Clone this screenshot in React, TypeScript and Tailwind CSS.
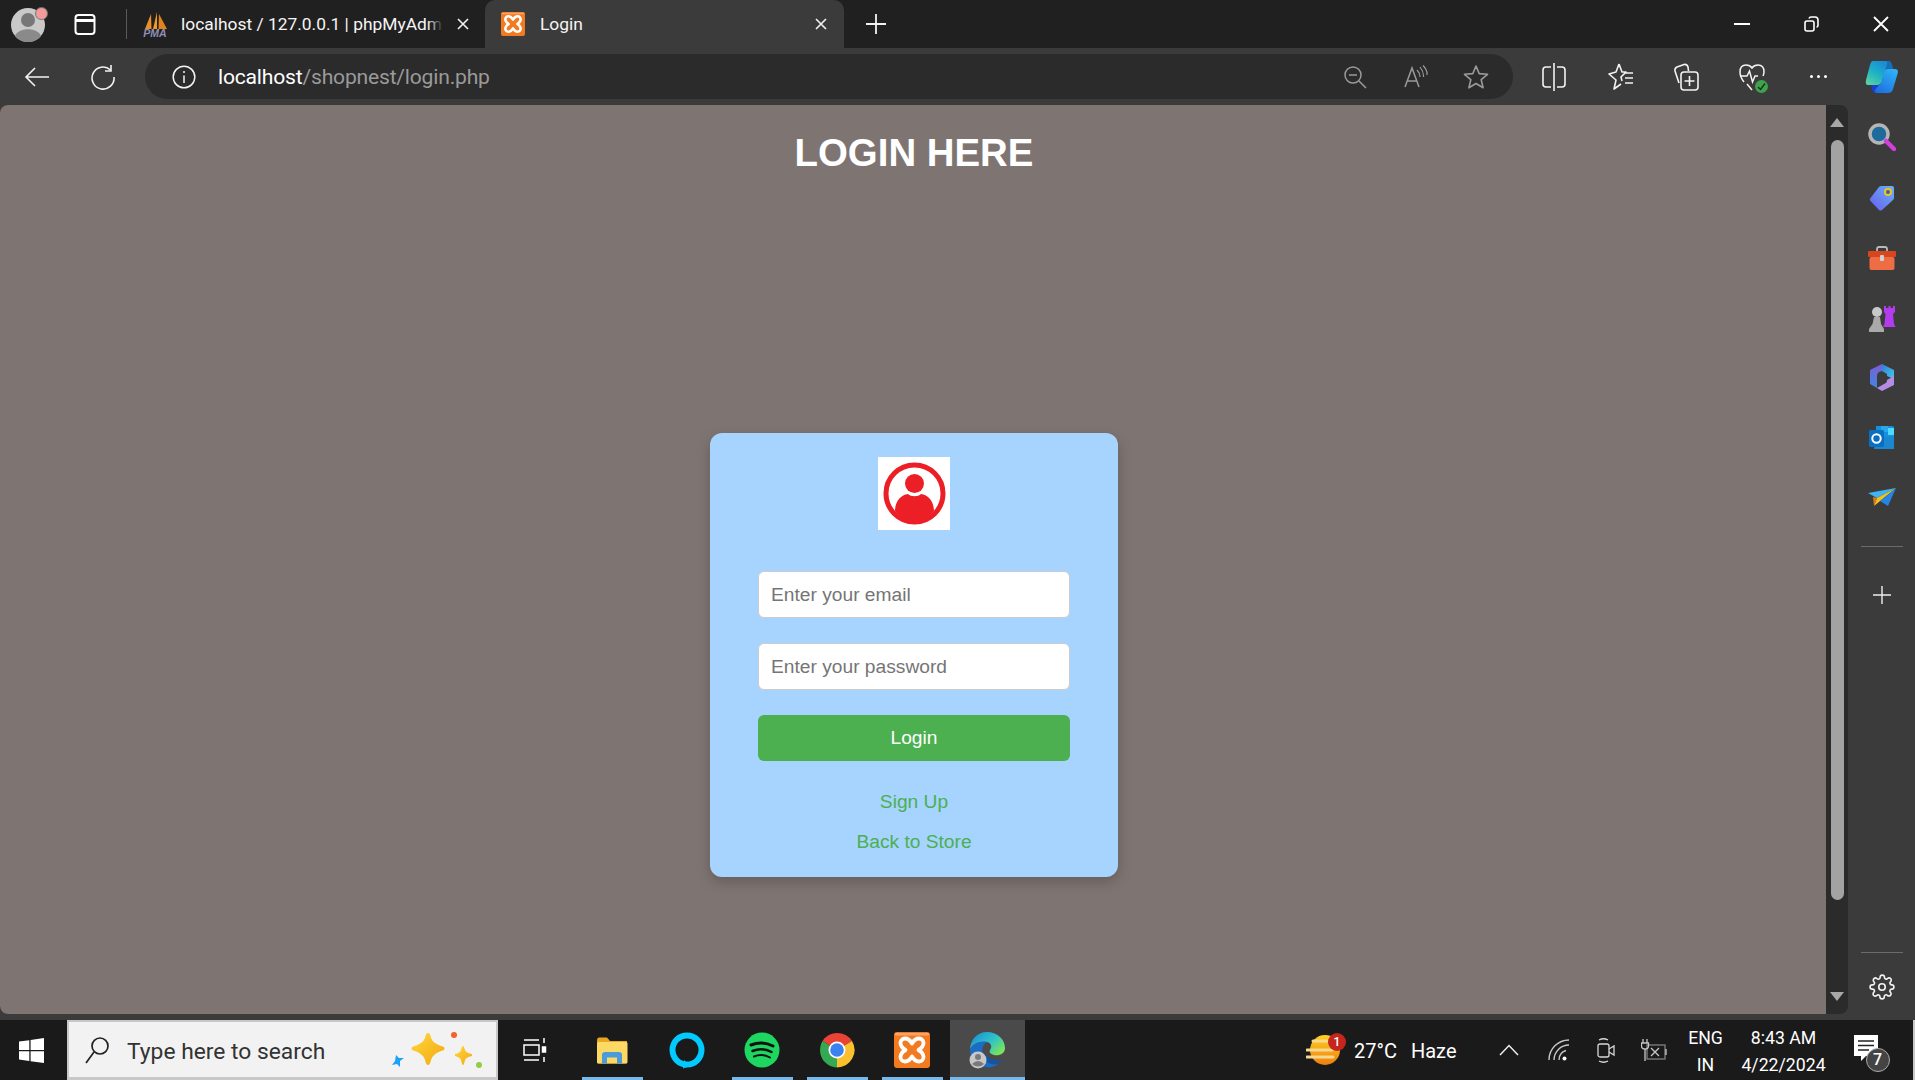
import React from "react";

const ui = { fontFamily: '"Roboto", "Noto Sans", sans-serif' };

function XamppIcon({ size }: { size: number }) {
  return (
    <svg width={size} height={size} viewBox="0 0 36 36">
      <rect x="0" y="0" width="36" height="36" rx="3" fill="#f47a20" />
      <rect x="1" y="1" width="34" height="2.5" rx="1.2" fill="#f9a66c" />
      <path d="M18 11.5 C16 8 13.5 6.5 11 6.5 C8 6.5 6.5 9 6.5 11 C6.5 14 9 16.5 11.5 18 C9 19.5 6.5 22 6.5 25 C6.5 27 8 29.5 11 29.5 C13.5 29.5 16 28 18 24.5 C20 28 22.5 29.5 25 29.5 C28 29.5 29.5 27 29.5 25 C29.5 22 27 19.5 24.5 18 C27 16.5 29.5 14 29.5 11 C29.5 9 28 6.5 25 6.5 C22.5 6.5 20 8 18 11.5 Z" fill="none" stroke="#fff" strokeWidth="3.8" strokeLinejoin="round" />
    </svg>
  );
}

function UserGlyph() {
  return (
    <svg width="72" height="73" viewBox="0 0 72 73" className="block">
      <rect width="72" height="73" fill="#fff" />
      <circle cx="36.5" cy="36.5" r="28.5" fill="#fff" stroke="#ed1f26" strokeWidth="5" />
      <circle cx="36.5" cy="26.5" r="9.5" fill="#ed1f26" />
      <path d="M17 54 C17 44 23 38 30 37 C33 40 40 40 43 37 C50 38 56 44 56 54 C51 60 44 64 36.5 64 C29 64 22 60 17 54 Z" fill="#ed1f26" />
    </svg>
  );
}

function TitleBar() {
  return (
    <div className="flex h-[48px] items-center bg-[#202020] text-[17.4px] text-[#f5f5f5]" style={ui}>
      <div className="relative ml-[11px] h-[35px] w-[35px] overflow-visible">
        <svg width="35" height="35" viewBox="0 0 35 35">
          <circle cx="17" cy="18" r="17" fill="#c9c9c9" />
          <circle cx="17" cy="13" r="7" fill="#777" />
          <path d="M4 29 C7 20 27 20 30 29 C24 37 10 37 4 29 Z" fill="#8a8a8a" />
        </svg>
        <span className="absolute right-[-1px] top-[1px] h-[11px] w-[11px] rounded-full bg-[#f49a9a] ring-1 ring-[#777]" />
      </div>
      <svg className="ml-[27px]" width="24" height="24" viewBox="0 0 24 24" fill="none" stroke="#fff" strokeWidth="2">
        <rect x="2.5" y="3" width="19" height="19" rx="3" />
        <path d="M2.5 8.5 H21.5" strokeWidth="3" />
      </svg>
      <div className="ml-[29px] h-[30px] w-px bg-[#5a5a5a]" />
      <div className="flex h-full w-[358px] items-center">
        <svg className="ml-[15px]" width="26" height="25" viewBox="0 0 26 25">
          <path d="M3 17 L9 2 L9.5 17 Z" fill="#e8912a" />
          <path d="M11 17 L15 0 L15 17 Z" fill="#f29b24" />
          <path d="M16.5 17 L17 2 L25 17 Z" fill="#e0831c" />
          <text x="13" y="24.5" textAnchor="middle" fontSize="10.5" fontWeight="700" fontStyle="italic" fontFamily="Liberation Sans" fill="#8c8fb8">PMA</text>
        </svg>
        <div className="relative ml-[13px] w-[262px] overflow-hidden whitespace-nowrap">
          localhost / 127.0.0.1 | phpMyAdmin
          <span className="absolute inset-y-0 right-0 w-[16px] bg-gradient-to-r from-transparent to-[#202020]" />
        </div>
        <svg className="ml-[14px]" width="12" height="12" viewBox="0 0 12 12" stroke="#f2f2f2" strokeWidth="1.6">
          <path d="M1 1 L11 11 M11 1 L1 11" />
        </svg>
      </div>
      <div className="flex h-full w-[359px] items-center rounded-t-[10px] bg-[#3b3b3b]">
        <div className="ml-[16px]"><XamppIcon size={24} /></div>
        <span className="ml-[15px] flex-1">Login</span>
        <svg className="mr-[17px]" width="12" height="12" viewBox="0 0 12 12" stroke="#f2f2f2" strokeWidth="1.6">
          <path d="M1 1 L11 11 M11 1 L1 11" />
        </svg>
      </div>
      <svg className="ml-[21px]" width="22" height="22" viewBox="0 0 22 22" stroke="#f2f2f2" strokeWidth="1.8">
        <path d="M11 1 V21 M1 11 H21" />
      </svg>
      <div className="flex-1" />
      <svg className="mr-[54px]" width="16" height="16" viewBox="0 0 16 16" stroke="#fff" strokeWidth="2">
        <path d="M0 8 H16" />
      </svg>
      <svg className="mr-[54px]" width="15" height="16" viewBox="0 0 15 16" fill="none" stroke="#fff" strokeWidth="1.6">
        <rect x="1" y="5" width="9" height="10" rx="2" />
        <path d="M5 2.5 Q5.5 1 7 1 H11 Q14 1 14 4 V9 Q14 11 12.5 11" />
      </svg>
      <svg className="mr-[26px]" width="16" height="16" viewBox="0 0 16 16" stroke="#fff" strokeWidth="1.8">
        <path d="M1 1 L15 15 M15 1 L1 15" />
      </svg>
    </div>
  );
}

function ToolBar() {
  const dim = "#9a9a9a";
  return (
    <div className="flex h-[57px] items-center bg-[#3b3b3b]" style={ui}>
      <svg className="ml-[24px]" width="26" height="24" viewBox="0 0 26 24" fill="none" stroke="#f2f2f2" strokeWidth="1.6">
        <path d="M25 12 H2 M11 3 L2 12 L11 21" />
      </svg>
      <svg className="ml-[40px]" width="26" height="26" viewBox="0 0 26 26" fill="none" stroke="#f2f2f2" strokeWidth="1.6">
        <path d="M20.5 6 A11 11 0 1 0 24 13" />
        <path d="M21 1 V7 H15" />
      </svg>
      <div className="ml-[29px] flex h-[45px] w-[1368px] items-center rounded-full bg-[#2b2b2b]">
        <svg className="ml-[27px]" width="24" height="24" viewBox="0 0 24 24" fill="none" stroke="#f2f2f2" strokeWidth="1.5">
          <circle cx="12" cy="12" r="10.8" />
          <path d="M12 10.5 V18 M12 6 V8" />
        </svg>
        <div className="ml-[22px] flex-1 pt-[1px] text-[21.1px] tracking-[-0.2px]">
          <span className="text-white">localhost</span>
          <span className="text-[#9a9a9a]">/shopnest/login.php</span>
        </div>
        <svg width="24" height="24" viewBox="0 0 24 24" fill="none" stroke={dim} strokeWidth="1.5">
          <circle cx="10" cy="10" r="8" />
          <path d="M6 10 H14 M16 16 L23 23" />
        </svg>
        <svg className="ml-[37px]" width="24" height="24" viewBox="0 0 24 24" fill="none" stroke={dim} strokeWidth="1.5">
          <path d="M1 22 L8 3 L15 22 M3.5 16 H12.5" />
          <path d="M13 5 Q16 8 16 12 M16 2 Q20 7 19.5 12 M19 0.5 Q23.5 5 23 10" strokeWidth="1.2" />
        </svg>
        <svg className="ml-[35px]" width="26" height="26" viewBox="0 0 26 26" fill="none" stroke={dim} strokeWidth="1.6">
          <path d="M13 2 L16.2 9.6 L24.5 10.3 L18.2 15.7 L20.1 23.8 L13 19.5 L5.9 23.8 L7.8 15.7 L1.5 10.3 L9.8 9.6 Z" strokeLinejoin="round" />
        </svg>
        <div className="w-[24px]" />
      </div>
      <svg className="ml-[29px]" width="24" height="28" viewBox="0 0 24 28" fill="none" stroke="#f2f2f2" strokeWidth="1.6">
        <path d="M12 0 V28" />
        <path d="M9 4 H4 Q1 4 1 7 V21 Q1 24 4 24 H9 M15 4 H20 Q23 4 23 7 V21 Q23 24 20 24 H15" />
      </svg>
      <svg className="ml-[42px]" width="26" height="28" viewBox="0 0 26 28" fill="none" stroke="#f2f2f2" strokeWidth="1.6">
        <path d="M11 1 L14 9 H18 L13 14 L14 18 M13 21 L6 26 L8 17 L1 11 L8 9 L11 1" strokeLinejoin="round" />
        <path d="M17 10 H25 M17 15 H25 M17 20 H25" />
      </svg>
      <svg className="ml-[39px]" width="26" height="28" viewBox="0 0 26 28" fill="none" stroke="#f2f2f2" strokeWidth="1.6">
        <path d="M6 20 L2 8 Q1.5 5 4 4 L11 1.5 Q14 1 15 4 L15.5 8" />
        <rect x="8" y="9" width="17" height="18" rx="3" />
        <path d="M16.5 13 V23 M11.5 18 H21.5" />
      </svg>
      <div className="relative ml-[40px] h-[32px] w-[26px]">
        <svg width="26" height="32" viewBox="0 0 26 32" fill="none" stroke="#f2f2f2" strokeWidth="1.5">
          <path d="M5 21 Q1 16 1 11 Q1 4 7 4 Q11 4 13 7 Q15 4 19 4 Q25 4 25 11 Q25 13 24 15" />
          <path d="M1 15 H8 L10.5 10 L13.5 21 L16 15 H19" />
          <path d="M8 23 L13 29" />
        </svg>
        <span className="absolute bottom-[0px] right-[-3px] flex h-[13px] w-[13px] items-center justify-center rounded-full bg-[#3fa34d]">
          <svg width="9" height="9" viewBox="0 0 9 9" fill="none" stroke="#16301c" strokeWidth="1.4"><path d="M1 5 L3.5 7.5 L8 1.5" /></svg>
        </span>
      </div>
      <div className="ml-[45px] flex gap-[4px]">
        <span className="h-[3px] w-[3px] rounded-full bg-white" />
        <span className="h-[3px] w-[3px] rounded-full bg-white" />
        <span className="h-[3px] w-[3px] rounded-full bg-white" />
      </div>
      <svg className="ml-[35px]" width="36" height="36" viewBox="0 0 36 36">
        <defs>
          <linearGradient id="cpA" x1="0" y1="1" x2="0.6" y2="0">
            <stop offset="0" stopColor="#63d79a" />
            <stop offset="0.55" stopColor="#1fb4c4" />
            <stop offset="1" stopColor="#1a8fd8" />
          </linearGradient>
          <linearGradient id="cpB" x1="0.2" y1="1" x2="0.8" y2="0">
            <stop offset="0" stopColor="#1e6fe0" />
            <stop offset="1" stopColor="#2fb2f5" />
          </linearGradient>
        </defs>
        <path d="M21 2 H27 Q30 2 31 10 H26 Q24 10 23 13 Z" fill="#176fb5" />
        <path d="M9 26 H15 Q17 26 18 23 L16 34 H13 Q10 34 9 26 Z" fill="#1c3fc4" />
        <path d="M11 2 H23 Q26 2 25 5 L20 22 Q19 26 15 26 H6 Q3 26 4 21 L8 6 Q9 2 11 2 Z" fill="url(#cpA)" />
        <path d="M26 10 H33 Q37 10 35.5 15 L31 30 Q30 34 26 34 H15 Q12 34 13 31 L17 26 Q19 25 20 22 L22 13 Q23 10 26 10 Z" fill="url(#cpB)" />
      </svg>
    </div>
  );
}

function SideIcons() {
  return (
    <div className="flex w-[67px] shrink-0 flex-col items-center bg-[#3b3b3b]">
      <div className="mt-[3px] flex h-[60px] items-center justify-center pb-[2px]">
        <svg width="28" height="28" viewBox="0 0 28 28">
          <circle cx="11" cy="11" r="9" fill="#1d6a9c" stroke="#b5b5b5" strokeWidth="3.5" />
          <path d="M18 18 L26 26" stroke="#d23fdc" strokeWidth="4.5" strokeLinecap="round" />
        </svg>
      </div>
      <div className="flex h-[60px] items-center justify-center">
        <svg width="26" height="26" viewBox="0 0 26 26">
          <defs><linearGradient id="tag" x1="0" y1="1" x2="1" y2="0"><stop offset="0" stopColor="#6a5cf0" /><stop offset="1" stopColor="#65b4f5" /></linearGradient></defs>
          <path d="M12 1 H23 Q25 1 25 3 V13 Q25 14 24 15 L13 25 Q11.5 26 10 25 L1.5 16 Q0 14.5 1.5 13 L10 2 Q11 1 12 1 Z" fill="url(#tag)" />
          <circle cx="19" cy="7" r="3" fill="#3a5fb0" stroke="#f3c31c" strokeWidth="2" />
        </svg>
      </div>
      <div className="flex h-[60px] items-center justify-center">
        <svg width="28" height="24" viewBox="0 0 28 24">
          <path d="M9 6 V3 Q9 1 11 1 H17 Q19 1 19 3 V6" fill="none" stroke="#b9b9b9" strokeWidth="1.8" />
          <rect x="0" y="5" width="28" height="6" rx="1" fill="#d8461e" />
          <rect x="1.5" y="11" width="25" height="13" rx="2" fill="#ee6d45" />
          <rect x="12" y="9" width="4" height="6" rx="1" fill="#d0d0d0" />
        </svg>
      </div>
      <div className="flex h-[60px] items-center justify-center">
        <svg width="28" height="28" viewBox="0 0 28 28">
          <path d="M16 2 H18 V4 H20.5 V2 H22.5 V4 H25 V2 H27 V8 L25 10 L26 20 L27.5 23 H15 L16.5 20 L17.5 10 L16 8 Z" fill="#b43cf0" />
          <circle cx="9" cy="8" r="5" fill="#c9c9c9" />
          <path d="M6 13 H12 L13 20 L16 25 V28 H1 V25 L4.5 20 Z" fill="#a9a9a9" />
        </svg>
      </div>
      <div className="flex h-[60px] items-center justify-center">
        <svg width="26" height="28" viewBox="0 0 26 28">
          <defs>
            <linearGradient id="m3a" x1="0" y1="0" x2="0" y2="1"><stop offset="0" stopColor="#7a5fd8" /><stop offset="1" stopColor="#3f87e0" /></linearGradient>
            <linearGradient id="m3b" x1="0" y1="0" x2="1" y2="1"><stop offset="0" stopColor="#2d7fd6" /><stop offset="1" stopColor="#48c6e8" /></linearGradient>
          </defs>
          <path d="M13 0 L25 6 V15 L18 12 V10 L13 7 Z" fill="url(#m3b)" />
          <path d="M13 0 L1 6 V20 L8 24 V12 Q8 9 10 8 L13 7 Z" fill="url(#m3a)" />
          <path d="M8 24 L13 27 L25 21 V12 L18 16 V17 Q18 19 15 20 L8 24 Z" fill="#b58be4" />
        </svg>
      </div>
      <div className="flex h-[60px] items-center justify-center">
        <svg width="26" height="26" viewBox="0 0 26 26">
          <path d="M7 1 H23 Q25 1 25 3 V24 H7 Z" fill="#1490df" />
          <path d="M12 1 H19 V7 H12 Z" fill="#28a8ea" />
          <path d="M19 3 H25 V10 H19 Z" fill="#50d9ff" />
          <path d="M7 12 L25 12 V24 H5 Z" fill="#1a87cf" />
          <rect x="0" y="5" width="15" height="17" rx="1.5" fill="#0a6fc2" />
          <circle cx="7.5" cy="13.5" r="4.2" fill="none" stroke="#fff" strokeWidth="2" />
        </svg>
      </div>
      <div className="flex h-[59px] items-center justify-center">
        <svg width="28" height="20" viewBox="0 0 28 20">
          <path d="M0 5 L28 0 L9 10 Z" fill="#3fb4f5" />
          <path d="M28 0 L9 10 L6 18 Z" fill="#f4c21c" />
          <path d="M28 0 L12 13 L20 18 Z" fill="#2585e0" />
          <path d="M9 10 L5 9 L6 18 Z" fill="#d97b1a" />
        </svg>
      </div>
      <div className="mt-[19px] h-px w-[42px] bg-[#6b6b6b]" />
      <svg className="mt-[39px]" width="18" height="18" viewBox="0 0 18 18" stroke="#eee" strokeWidth="1.4">
        <path d="M9 0 V18 M0 9 H18" />
      </svg>
      <div className="flex-1" />
      <div className="h-px w-[42px] bg-[#6b6b6b]" />
      <svg className="mb-[20px] mt-[21px]" width="26" height="26" viewBox="0 0 24 24" fill="none" stroke="#f2f2f2" strokeWidth="1.5">
        <circle cx="12" cy="12" r="3" />
        <path d="M19.4 15a1.65 1.65 0 0 0 .33 1.82l.06.06a2 2 0 1 1-2.83 2.83l-.06-.06a1.65 1.65 0 0 0-2.82 1.17V21a2 2 0 1 1-4 0v-.09a1.65 1.65 0 0 0-2.82-1.17l-.06.06a2 2 0 1 1-2.83-2.83l.06-.06A1.65 1.65 0 0 0 3.09 14H3a2 2 0 1 1 0-4h.09a1.65 1.65 0 0 0 1.51-2.82l-.06-.06a2 2 0 1 1 2.83-2.83l.06.06A1.65 1.65 0 0 0 10.25 3.1V3a2 2 0 1 1 4 0v.09a1.65 1.65 0 0 0 2.82 1.17l.06-.06a2 2 0 1 1 2.83 2.83l-.06.06A1.65 1.65 0 0 0 20.91 10H21a2 2 0 1 1 0 4h-.09a1.65 1.65 0 0 0-1.51 1Z" />
      </svg>
    </div>
  );
}

function LoginCard() {
  const field = "h-[47px] w-[312px] rounded-[6px] border border-[#cccccc] bg-white px-[12px] text-[19.2px] text-black outline-none placeholder:text-[#757575]";
  return (
    <div className="mx-auto mt-[258px] flex h-[444px] w-[408px] flex-col items-center rounded-[12px] bg-[#a6d4fe] pt-[24px] shadow-[0_5px_14px_rgba(0,0,0,0.2)]">
      <UserGlyph />
      <input className={`${field} mt-[41px]`} placeholder="Enter your email" />
      <input className={`${field} mt-[25px]`} placeholder="Enter your password" />
      <button className="mt-[25px] h-[46px] w-[312px] rounded-[6px] bg-[#4caf50] text-[19.2px] text-white">Login</button>
      <a className="mt-[30px] text-[19.2px] leading-[22px] text-[#4caf50]">Sign Up</a>
      <a className="mt-[18px] text-[19.2px] leading-[22px] text-[#4caf50]">Back to Store</a>
    </div>
  );
}

function Browser() {
  return (
    <div className="flex h-[915px] bg-[#3b3b3b]">
      <div className="flex h-[909px] flex-1 overflow-hidden rounded-[8px] bg-[#2b2b2b]">
        <div className="flex-1 bg-[#7e7472] pl-[2px] pt-[26px]" style={{ fontFamily: '"Liberation Sans", Arial, sans-serif' }}>
          <h2 className="text-center text-[38.4px] font-bold leading-[44px] text-white">LOGIN HERE</h2>
          <LoginCard />
        </div>
        <div className="flex w-[22px] flex-col items-center">
          <div className="mt-[13px] h-0 w-0 border-x-[7.5px] border-b-[9px] border-x-transparent border-b-[#a8a8a8]" />
          <div className="mt-[13px] h-[760px] w-[13px] rounded-full bg-[#a3a3a3]" />
          <div className="mt-[92px] h-0 w-0 border-x-[7.5px] border-t-[9px] border-x-transparent border-t-[#a8a8a8]" />
        </div>
      </div>
      <SideIcons />
    </div>
  );
}

function TaskSlot({ children, line, active }: { children: React.ReactNode; line?: boolean; active?: boolean }) {
  return (
    <div className={`relative flex h-full w-[75px] items-center justify-center pr-[2px] ${active ? "bg-[#4a4a4a]" : ""}`}>
      {children}
      {line ? <span className={`absolute bottom-0 h-[3px] bg-[#76b9ed] ${active ? "inset-x-0" : "left-[7px] w-[61px]"}`} /> : null}
    </div>
  );
}

function Taskbar() {
  return (
    <div className="flex h-[60px] items-stretch bg-[#1a1a1a] text-white" style={ui}>
      <div className="flex w-[67px] items-center justify-center pr-[4px]">
        <svg width="25" height="25" viewBox="0 0 25 25" fill="#fff">
          <path d="M0 3.6 L10.3 2.2 V12 H0 Z M11.6 2 L25 0 V12 H11.6 Z M0 13.2 H10.3 V23 L0 21.6 Z M11.6 13.2 H25 V25 L11.6 23.2 Z" />
        </svg>
      </div>
      <div className="flex w-[431px] items-center border-2 border-b-[3px] border-[#c8c8c8] bg-[#f2f2f2] text-[#333]">
        <svg className="ml-[15px]" width="26" height="28" viewBox="0 0 26 28" fill="none" stroke="#222" strokeWidth="1.7">
          <circle cx="16" cy="10" r="8" />
          <path d="M10 16 L2 27" />
        </svg>
        <span className="ml-[17px] pt-[6px] text-[22.8px] leading-none">Type here to search</span>
        <div className="flex-1" />
        <svg className="mr-[13px]" width="94" height="36" viewBox="0 0 94 36">
          <defs><linearGradient id="spk" x1="0" y1="0" x2="1" y2="1"><stop offset="0" stopColor="#ffd83a" /><stop offset="1" stopColor="#f3a712" /></linearGradient></defs>
          <path d="M39 1 Q41 1 42 6 Q44 12 55 15 Q56 16.5 55 18 Q44 21 42 28 Q41 33 39 33 Q37 33 36 28 Q34 21 23 18 Q22 16.5 23 15 Q34 12 36 6 Q37 1 39 1 Z" fill="url(#spk)" />
          <path d="M74 14 Q75 14 76 18 Q77 21 83 22 V24 Q77 25 76 28 Q75 33 74 33 Q73 33 72 28 Q71 25 66 24 V22 Q71 21 72 18 Q73 14 74 14 Z" fill="url(#spk)" />
          <path d="M7 23 L10 26 L15 26 L11 29 L11 35 L8 32 L3 33 L6 29 Z" fill="#1aa3f5" />
          <circle cx="65" cy="3" r="3" fill="#f2622a" />
          <circle cx="90" cy="33" r="3" fill="#92cc48" />
        </svg>
      </div>
      <div className="flex w-[77px] items-center justify-center pr-[4px]">
        <svg width="24" height="26" viewBox="0 0 24 26" fill="none" stroke="#fff" strokeWidth="1.5">
          <rect x="1" y="8" width="15" height="10" />
          <path d="M1 3 H16 M1 23 H16 M21 1 V6 M21 20 V25" />
          <rect x="19.5" y="10" width="3" height="5" fill="#fff" />
        </svg>
      </div>
      <TaskSlot line>
        <svg width="32" height="27" viewBox="0 0 32 27">
          <path d="M1 3 Q1 0.5 3 0.5 H11 L14 4 H31 V25 Q31 26.5 29 26.5 H3 Q1 26.5 1 25 Z" fill="#e8a821" />
          <rect x="1" y="5" width="30.5" height="21.5" rx="1.5" fill="#fcd865" />
          <path d="M6 26.5 V18 Q6 15 9 15 H23 Q26 15 26 18 V26.5 H21 V20.5 H11 V26.5 Z" fill="#4a9bdb" />
        </svg>
      </TaskSlot>
      <TaskSlot>
        <svg width="36" height="37" viewBox="0 0 36 37">
          <path d="M18 0.5 A17.5 17.5 0 1 1 18 35.5 A17.5 17.5 0 1 1 18 0.5 Z M18 6.5 A11.5 11.5 0 1 0 18 29.5 A11.5 11.5 0 1 0 18 6.5 Z" fill="#00caff" fillRule="evenodd" />
          <path d="M15 28 L14 36.5 L21 34 Z" fill="#00caff" />
        </svg>
      </TaskSlot>
      <TaskSlot line>
        <svg width="36" height="36" viewBox="0 0 36 36" fill="none">
          <circle cx="18" cy="18" r="17.5" fill="#1ed760" />
          <path d="M7 13 Q18 8.5 29 14" stroke="#111" strokeWidth="3" strokeLinecap="round" />
          <path d="M8.5 19 Q18 15 27.5 20" stroke="#111" strokeWidth="2.5" strokeLinecap="round" />
          <path d="M10 24.5 Q18 21 26 25.5" stroke="#111" strokeWidth="2" strokeLinecap="round" />
        </svg>
      </TaskSlot>
      <TaskSlot line>
        <svg width="36" height="36" viewBox="0 0 36 36">
          <path d="M18 18 L3.5 9 A17.5 17.5 0 0 1 33 9 Z" fill="#ea4335" />
          <path d="M18 18 L33 9 A17.5 17.5 0 0 1 18 35.5 Z" fill="#fbc02d" />
          <path d="M18 18 L18 35.5 A17.5 17.5 0 0 1 3.5 9 Z" fill="#34a853" />
          <circle cx="18" cy="18" r="8.5" fill="#fff" />
          <circle cx="18" cy="18" r="6.8" fill="#3b82f0" />
        </svg>
      </TaskSlot>
      <TaskSlot line>
        <XamppIcon size={36} />
      </TaskSlot>
      <TaskSlot line active>
        <svg width="38" height="38" viewBox="0 0 38 38">
          <defs>
            <linearGradient id="edg" x1="0" y1="0" x2="1" y2="0.7"><stop offset="0" stopColor="#1b86d8" /><stop offset="0.6" stopColor="#2fc3c8" /><stop offset="1" stopColor="#7be35a" /></linearGradient>
          </defs>
          <path d="M19 1 C29 1 37 8 37 17 C37 23 31 25 26 24 C22 23 21 21 22 19 C24 17 24 12 19 11 C11 10 4 13 2 19 C2 9 9 1 19 1 Z" fill="url(#edg)" />
          <path d="M2 19 C5 12 14 9 19 11 C15 13 13 18 15 24 C16 30 23 35 30 33 C26 36 22 37 18 36 C8 35 2 28 2 19 Z" fill="#1b6cc4" />
          <path d="M15 22 C15 28 20 33 26 33 C30 33 33 31 35 29 C31 30 24 30 20 26 C18 24 16 23 15 22 Z" fill="#0f56a8" />
          <circle cx="10" cy="29" r="8.5" fill="#c7c7c7" />
          <circle cx="10" cy="26" r="3" fill="#7a7a7a" />
          <path d="M4 33 Q10 27 16 33 Q10 38 4 33 Z" fill="#7a7a7a" />
        </svg>
      </TaskSlot>
      <div className="ml-[281px] flex items-center">
        <div className="relative h-[32px] w-[37px]">
          <svg width="37" height="32" viewBox="0 0 37 32">
            <defs><linearGradient id="sun" x1="0" y1="0" x2="0" y2="1"><stop offset="0" stopColor="#ffd21f" /><stop offset="1" stopColor="#f07d0f" /></linearGradient></defs>
            <circle cx="19" cy="16" r="15" fill="url(#sun)" />
            <path d="M7 7 H22 M1 16 H26 M1 23 H27" stroke="#f6d98e" strokeWidth="3" strokeLinecap="round" />
          </svg>
          <span className="absolute right-[-3px] top-[-1px] flex h-[18px] w-[18px] items-center justify-center rounded-full bg-[#c4261d] text-[12px] font-medium leading-none">1</span>
        </div>
      </div>
      <div className="ml-[11px] flex items-center gap-[14px] pt-[2px] text-[20px]">
        <span>27°C</span>
        <span>Haze</span>
      </div>
      <div className="ml-[42px] flex items-center">
        <svg width="20" height="12" viewBox="0 0 20 12" fill="none" stroke="#eee" strokeWidth="1.5">
          <path d="M1 11 L10 1.5 L19 11" />
        </svg>
        <svg className="ml-[29px]" width="22" height="22" viewBox="0 0 22 22" fill="none" stroke="#c8c8c8" strokeWidth="1.4">
          <path d="M1 21 A20 20 0 0 1 21 1 M6 21 A15 15 0 0 1 21 6 M11 21 A10 10 0 0 1 18 11.5" />
          <circle cx="16.5" cy="19.5" r="2" fill="#fff" stroke="none" />
        </svg>
        <svg className="ml-[27px]" width="18" height="27" viewBox="0 0 18 27" fill="none" stroke="#d8d8d8" strokeWidth="1.3">
          <rect x="1" y="7" width="11" height="13" rx="2" />
          <path d="M12 12 L17 9 V18 L12 15" />
          <path d="M2 3 Q6.5 0.5 11 3 M2 24 Q6.5 26.5 11 24" />
        </svg>
        <svg className="ml-[26px]" width="26" height="24" viewBox="0 0 26 24" fill="none" stroke="#c8c8c8" strokeWidth="1.3">
          <path d="M2 1 V5 M6 1 V5 M0.5 5 H7.5 V8 Q7.5 11 4 11 Q0.5 11 0.5 8 Z M4 11 V23" />
          <rect x="6" y="7" width="18" height="14" strokeOpacity="0.6" />
          <path d="M10 10 L18 18 M18 10 L10 18" />
          <path d="M25 11 V17" />
        </svg>
      </div>
      <div className="ml-[14px] flex w-[50px] flex-col items-center justify-center gap-[4px] pt-[3px] text-[17.7px] leading-[23px]">
        <span>ENG</span>
        <span>IN</span>
      </div>
      <div className="ml-[3px] flex w-[100px] flex-col items-center justify-center gap-[4px] pt-[3px] text-[17.7px] leading-[23px]">
        <span>8:43 AM</span>
        <span>4/22/2024</span>
      </div>
      <div className="ml-[20px] flex items-center">
        <div className="relative h-[30px] w-[24px]">
          <svg width="24" height="30" viewBox="0 0 24 30">
            <path d="M0 0 H24 V21 H12 L7 26 V21 H0 Z" fill="#fff" />
            <path d="M4 6 H20 M4 10.5 H20 M4 15 H15" stroke="#222" strokeWidth="1.4" />
          </svg>
          <span className="absolute left-[12px] top-[13px] flex h-[24px] w-[24px] items-center justify-center rounded-full border border-[#aaa] bg-[#444] text-[16px] font-medium">7</span>
        </div>
      </div>
      <div className="flex-1" />
      <div className="w-[2px] bg-[#c8c8c8]" />
    </div>
  );
}

export default function App() {
  return (
    <div className="h-[1080px] w-[1915px] overflow-hidden">
      <TitleBar />
      <ToolBar />
      <Browser />
      <Taskbar />
    </div>
  );
}
